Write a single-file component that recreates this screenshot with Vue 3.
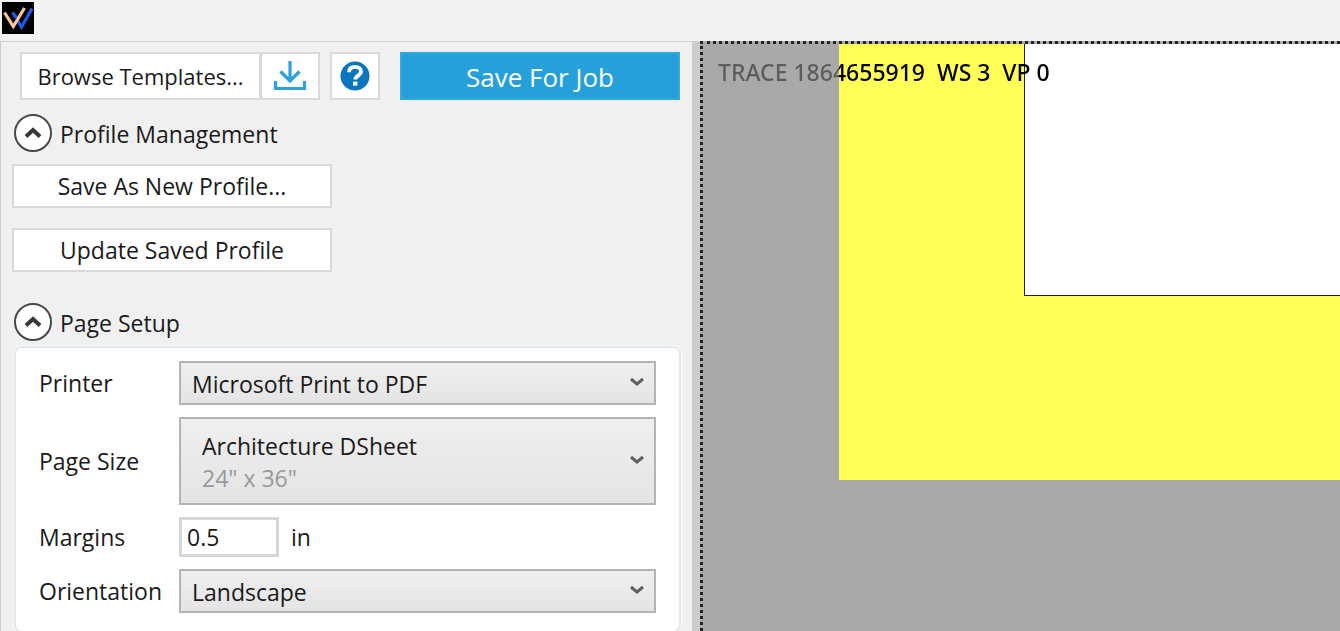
<script setup>
import { ref } from 'vue'

const printer = ref('Microsoft Print to PDF')
const pageSize = ref('Architecture DSheet')
const margins = ref('0.5')
const orientation = ref('Landscape')
const profileOpen = ref(true)
const setupOpen = ref(true)
</script>

<template>
  <div class="window">
    <header class="titlebar">
      <svg class="logo" viewBox="0 0 32 32" aria-hidden="true">
        <rect width="32" height="32" fill="#000" />
        <path d="M10.500 10.500l4 5.500M16 19l3.500 6L30 6.500" fill="none" stroke="#2456f0" stroke-width="3.200" />
        <path d="M2.500 10.500l8.800 14L22.500 6" fill="none" stroke="#f8c49a" stroke-width="3.200" />
      </svg>
    </header>

    <div class="body">
      <aside class="panel">
        <div class="toolbar">
          <button type="button" class="btn browse">Browse Templates...</button>
          <button type="button" class="btn download" aria-label="Download templates">
            <svg width="34" height="32" viewBox="0 0 34 32" fill="none" stroke="#2aa2dc" aria-hidden="true">
              <path d="M17 1v20M7.500 11.500L17 21l9.500-9.500" stroke-width="3.200" />
              <path d="M2.500 21v7.500h29V21" stroke-width="3.200" />
            </svg>
          </button>
          <button type="button" class="btn help" aria-label="Help">
            <svg width="30" height="30" viewBox="0 0 30 30" aria-hidden="true">
              <circle cx="15" cy="15" r="14.500" fill="#0b76bc" />
              <path d="M9 11.300c0-3.700 2.600-5.400 6-5.400s6 1.700 6 4.700c0 4-5.700 4-5.700 7.900" fill="none" stroke="#fff" stroke-width="3.800" />
              <rect x="13" y="20.600" width="4.400" height="4" fill="#fff" />
            </svg>
          </button>
          <button type="button" class="save">Save For Job</button>
        </div>

        <section class="profile">
          <h2 class="heading">
            <button type="button" class="toggle" :aria-expanded="profileOpen" @click="profileOpen = !profileOpen">
              <svg width="38" height="38" viewBox="0 0 38 38" aria-hidden="true">
                <circle cx="19" cy="19" r="18" fill="#fff" stroke="#484848" stroke-width="2" />
                <path d="M12 22.500l7-6.500 7 6.500" fill="none" stroke="#383838" stroke-width="4" />
              </svg>
              <span>Profile Management</span>
            </button>
          </h2>
          <div v-if="profileOpen" class="profile-actions">
            <button type="button" class="btn wide">Save As New Profile...</button>
            <button type="button" class="btn wide">Update Saved Profile</button>
          </div>
        </section>

        <section class="setup">
          <h2 class="heading">
            <button type="button" class="toggle" :aria-expanded="setupOpen" @click="setupOpen = !setupOpen">
              <svg width="38" height="38" viewBox="0 0 38 38" aria-hidden="true">
                <circle cx="19" cy="19" r="18" fill="#fff" stroke="#484848" stroke-width="2" />
                <path d="M12 22.500l7-6.500 7 6.500" fill="none" stroke="#383838" stroke-width="4" />
              </svg>
              <span>Page Setup</span>
            </button>
          </h2>
          <form v-if="setupOpen" class="card" @submit.prevent>
            <label for="printer">Printer</label>
            <div class="combo">
              <select id="printer" v-model="printer"><option>Microsoft Print to PDF</option></select>
              <svg class="chevron" viewBox="0 0 14 10" aria-hidden="true"><path d="M1 2l6 5 6-5" /></svg>
            </div>
            <label for="size">Page Size</label>
            <div class="combo tall">
              <select id="size" v-model="pageSize"><option>Architecture DSheet</option></select>
              <span class="dims">24" x 36"</span>
              <svg class="chevron" viewBox="0 0 14 10" aria-hidden="true"><path d="M1 2l6 5 6-5" /></svg>
            </div>
            <label for="margins">Margins</label>
            <div class="margin-row">
              <input id="margins" v-model="margins" type="text" />
              <span>in</span>
            </div>
            <label for="orientation">Orientation</label>
            <div class="combo">
              <select id="orientation" v-model="orientation"><option>Landscape</option></select>
              <svg class="chevron" viewBox="0 0 14 10" aria-hidden="true"><path d="M1 2l6 5 6-5" /></svg>
            </div>
          </form>
        </section>
      </aside>

      <main class="preview">
        <div class="sheet"><div class="drawing"></div></div>
        <p class="trace">TRACE 1864655919&nbsp; WS 3&nbsp; VP 0</p>
      </main>
    </div>
  </div>
</template>

<style>
body {
  margin: 0;
  overflow: hidden;
}
</style>

<style scoped>
* {
  box-sizing: border-box;
}
.window {
  display: flex;
  flex-direction: column;
  height: 100vh;
  overflow: hidden;
  background: #f0f0f0;
  color: #1a1a1a;
  font: 23px/30px "Open Sans", "Noto Sans", sans-serif;
}
button,
select,
input {
  font: inherit;
  color: inherit;
  margin: 0;
  border-radius: 0;
}
.titlebar {
  flex: none;
  height: 41px;
  padding: 2px;
  background: #f3f3f3;
}
.logo {
  display: block;
  width: 32px;
  height: 32px;
}
.body {
  flex: 1;
  display: flex;
  min-height: 0;
}
.panel {
  flex: none;
  width: 700px;
  border-top: 1px solid #cdcdcd;
  border-left: 1px solid #cdcdcd;
  border-right: 8px solid #cdcdcd;
  padding: 10px 11px 0;
}
.toolbar {
  display: flex;
  height: 48px;
  padding-left: 8px;
}
.btn {
  display: flex;
  align-items: center;
  justify-content: center;
  padding: 0;
  background: #fff;
  border: 2px solid #dadada;
  white-space: nowrap;
}
.browse {
  width: 241px;
  font-size: 22px;
}
.download {
  width: 60px;
  margin-left: -1px;
}
.help {
  width: 50px;
  margin-left: 10px;
}
.save {
  width: 280px;
  margin-left: 20px;
  padding: 2px 0 0;
  border: 2px solid #36a7df;
  background: #26a0da;
  color: #fff;
  font-size: 26px;
}
.heading {
  margin: 0;
  font: inherit;
}
.toggle {
  display: flex;
  align-items: center;
  gap: 8px;
  padding: 0 0 0 2px;
  border: 0;
  background: none;
}
.toggle svg {
  display: block;
}
.toggle span {
  padding-top: 2px;
}
.profile {
  margin-top: 14px;
}
.profile-actions {
  display: grid;
  gap: 20px;
  padding-top: 12px;
}
.wide {
  width: 320px;
  height: 44px;
}
.setup {
  margin-top: 31px;
}
.card {
  display: grid;
  grid-template-columns: 140px 1fr;
  gap: 12px 0;
  align-items: center;
  margin: 5px 0 0 2px;
  padding: 13px 23px 18px;
  border: 2px solid #e2e9ee;
  border-radius: 8px;
  background: #fff;
  outline: 1px solid #fafafa;
}
.combo {
  position: relative;
  height: 44px;
}
.tall {
  height: 88px;
}
select {
  appearance: none;
  display: block;
  width: 100%;
  height: 100%;
  padding: 2px 40px 0 11px;
  border: 2px solid #b4b4b4;
  background: linear-gradient(#efefef, #e4e4e4);
}
.tall select {
  padding: 0 40px 30px 21px;
}
.dims {
  position: absolute;
  left: 23px;
  bottom: 12px;
  color: #999;
  pointer-events: none;
}
.chevron {
  position: absolute;
  right: 12px;
  top: calc(50% - 6px);
  width: 14px;
  height: 10px;
  pointer-events: none;
  fill: none;
  stroke: #606060;
  stroke-width: 3;
}
.margin-row {
  display: flex;
  align-items: center;
  gap: 12px;
}
input {
  width: 100px;
  height: 40px;
  padding: 0 5px;
  border: 3px solid #d6d6d6;
  background: #fff;
}
.preview {
  position: relative;
  flex: 1;
  min-width: 0;
  display: flex;
  border: 3px dotted #222;
  border-width: 3px 0 0 3px;
  background: #a9a9a9;
}
.sheet {
  flex: 1;
  height: 436px;
  margin-left: 136px;
  padding-left: 185px;
  background: #ffff57;
}
.drawing {
  height: 252px;
  border: 1px solid #222;
  border-width: 0 0 1px 1px;
  background: #fff;
}
.trace {
  position: absolute;
  left: 15px;
  top: 13px;
  margin: 0;
  white-space: nowrap;
  font-family: "Noto Sans", sans-serif;
  font-weight: 500;
  color: transparent;
  background: linear-gradient(90deg, #5c5c5c 121px, #000 121px);
  background-clip: text;
}
</style>
